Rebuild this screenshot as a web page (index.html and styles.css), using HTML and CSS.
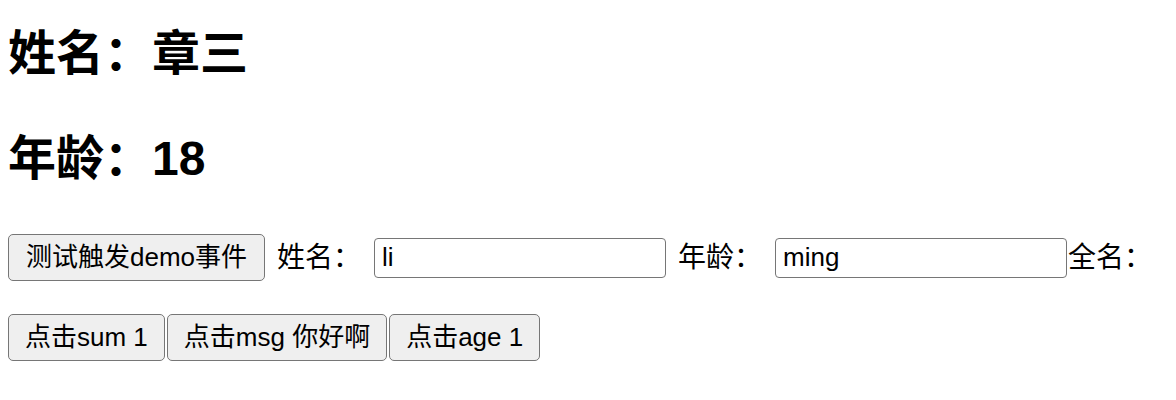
FILE: index.html
```html
<!DOCTYPE html>
<html lang="zh-CN">
<head>
    <meta charset="UTF-8">
    <meta name="viewport" content="width=device-width, initial-scale=1.0">
    <title>事件演示</title>
    <link rel="stylesheet" href="styles.css">
</head>
<body>

    <div class="app">
        <h1 class="title name">姓名：章三</h1>
        <h1 class="title age">年龄：18</h1>

        <div class="form-row">
            <button class="btn">测试触发demo事件</button>
            <span class="label">姓名：</span>
            <input class="field" type="text" value="li">
            <span class="label">年龄：</span>
            <input class="field" type="text" value="ming">
            <span class="label tight">全名：</span>
        </div>

        <div class="btn-row">
            <button class="btn">点击sum 1</button>
            <button class="btn">点击msg 你好啊</button>
            <button class="btn">点击age 1</button>
        </div>
    </div>

</body>
</html>
```

FILE: styles.css
```css
* {
    box-sizing: border-box;
}

body {
    margin: 0;
    font-family: 'Liberation Sans', 'Noto Sans CJK SC', sans-serif;
    color: #000;
    background: #fff;
}

.app {
    padding: 0 8px;
}

.title {
    margin: 0;
    font-size: 48px;
    line-height: 56px;
    font-weight: bold;
}

.name {
    padding-top: 26px;
}

.age {
    margin-top: 49px;
}

/* button + inputs row */
.form-row {
    display: flex;
    align-items: center;
    margin-top: 47px;
}

.btn-row {
    display: flex;
    gap: 2px;
    margin-top: 33px;
}

.btn {
    font-family: inherit;
    font-size: 26px;
    line-height: 31px;
    padding: 7px 17px;
    color: #000;
    background-color: #efefef;
    border: 1px solid #767676;
    border-radius: 5px;
    white-space: nowrap;
}

.btn-row .btn {
    padding: 7px 16px;
}

.label {
    font-size: 28px;
    line-height: 34px;
    margin: 0 13px 0 12px;
    white-space: nowrap;
}

.label.tight {
    margin-left: 1px;
}

.field {
    width: 292px;
    height: 40px;
    padding: 0 7px;
    font-family: inherit;
    font-size: 26px;
    color: #000;
    border: 1px solid #767676;
    border-radius: 4px;
    background: #fff;
}
```
